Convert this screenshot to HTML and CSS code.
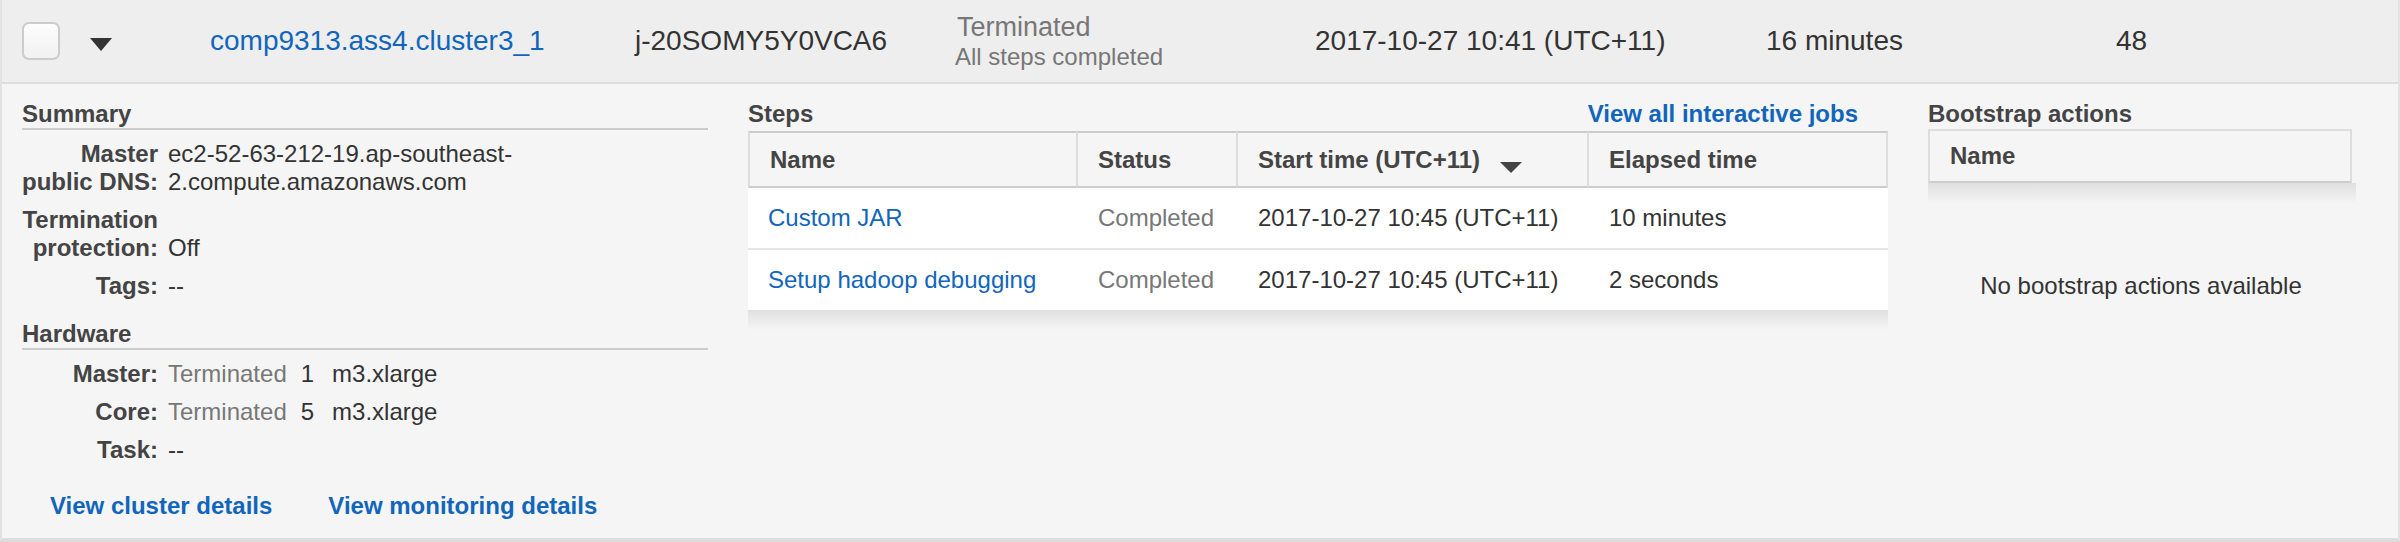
FILE: index.html
```html
<!DOCTYPE html>
<html lang="en">
<head>
<meta charset="utf-8">
<title>Cluster</title>
<link rel="stylesheet" href="styles.css">
</head>
<body>
<div class="cluster">
  <div class="row-head">
    <div class="c-check"><span class="checkbox"></span></div>
    <div class="c-toggle"><svg width="22" height="13" viewBox="0 0 22 13"><polygon points="0,0 22,0 11,13" fill="#333"/></svg></div>
    <div class="c-name"><a class="link">comp9313.ass4.cluster3_1</a></div>
    <div class="c-text">j-20SOMY5Y0VCA6</div>
    <div class="c-status">
      <div class="st-main">Terminated</div>
      <div class="st-sub">All steps completed</div>
    </div>
    <div class="c-text">2017-10-27 10:41 (UTC+11)</div>
    <div class="c-text">16 minutes</div>
    <div class="c-text">48</div>
  </div>

  <div class="details">
    <div class="col-left">
      <h3 class="sec-title ruled">Summary</h3>
      <div class="kv">
        <div class="kv-row">
          <div class="kv-label">Master<br>public DNS:</div>
          <div class="kv-value">ec2-52-63-212-19.ap-southeast-<br>2.compute.amazonaws.com</div>
        </div>
        <div class="kv-row">
          <div class="kv-label">Termination<br>protection:</div>
          <div class="kv-value">Off</div>
        </div>
        <div class="kv-row">
          <div class="kv-label">Tags:</div>
          <div class="kv-value">--</div>
        </div>
      </div>

      <h3 class="sec-title ruled hw">Hardware</h3>
      <div class="kv">
        <div class="kv-row">
          <div class="kv-label">Master:</div>
          <div class="kv-value"><span class="muted">Terminated</span><span class="cnt">1</span><span>m3.xlarge</span></div>
        </div>
        <div class="kv-row">
          <div class="kv-label">Core:</div>
          <div class="kv-value"><span class="muted">Terminated</span><span class="cnt">5</span><span>m3.xlarge</span></div>
        </div>
        <div class="kv-row">
          <div class="kv-label">Task:</div>
          <div class="kv-value">--</div>
        </div>
      </div>

      <div class="links">
        <a class="link bold">View cluster details</a>
        <a class="link bold">View monitoring details</a>
      </div>
    </div>

    <div class="col-mid">
      <div class="mid-head">
        <h3 class="sec-title">Steps</h3>
        <a class="link bold jobs">View all interactive jobs</a>
      </div>
      <div class="steps">
        <div class="th first">Name</div>
        <div class="th">Status</div>
        <div class="th">Start time (UTC+11) <svg class="sort" width="22" height="11" viewBox="0 0 22 11"><polygon points="0,0 22,0 11,11" fill="#444"/></svg></div>
        <div class="th last">Elapsed time</div>

        <div class="td first"><a class="link">Custom JAR</a></div>
        <div class="td muted">Completed</div>
        <div class="td">2017-10-27 10:45 (UTC+11)</div>
        <div class="td">10 minutes</div>

        <div class="td first lastrow"><a class="link">Setup hadoop debugging</a></div>
        <div class="td muted lastrow">Completed</div>
        <div class="td lastrow">2017-10-27 10:45 (UTC+11)</div>
        <div class="td lastrow">2 seconds</div>
      </div>
      <div class="shade"></div>
    </div>

    <div class="col-right">
      <h3 class="sec-title">Bootstrap actions</h3>
      <div class="bs-head">Name</div>
      <div class="shade bs-shade"></div>
      <div class="empty">No bootstrap actions available</div>
    </div>
  </div>
</div>
</body>
</html>
```

FILE: styles.css
```css
html, body {
  margin: 0;
  padding: 0;
}

body {
  background: #dddddd;
  font-family: "Liberation Sans", Helvetica, Arial, sans-serif;
  color: #333333;
  width: 2400px;
  height: 542px;
  overflow: hidden;
}

.cluster {
  border-left: 2px solid #e2e2e2;
  border-right: 2px solid #e2e2e2;
}

.link {
  color: #1166bb;
  text-decoration: none;
}

.bold {
  font-weight: bold;
}

.muted {
  color: #777777;
}

/* ---------- top row ---------- */
.row-head {
  height: 82px;
  background: #eeeeee;
  border-bottom: 2px solid #dddddd;
  display: grid;
  grid-template-columns: 68px 120px 425px 322px 358px 451px 350px 1fr;
  align-items: center;
  padding-left: 20px;
  font-size: 28px;
  line-height: 32px;
}

.c-check {
  display: flex;
  align-items: center;
}

.checkbox {
  display: block;
  width: 34px;
  height: 34px;
  border: 2px solid #cccccc;
  border-radius: 7px;
  background: linear-gradient(#fdfdfd, #f1f1f1);
}

.c-toggle {
  display: flex;
  margin-top: 6px;
}

.c-status {
  color: #777777;
}

.st-main {
  font-size: 27px;
  line-height: 30px;
}

.st-sub {
  font-size: 24px;
  line-height: 29px;
  margin-left: -2px;
}

/* ---------- details ---------- */
.details {
  background: #f5f5f5;
  border-bottom: 2px solid #dddddd;
  display: flex;
  padding: 16px 0 18px 20px;
  font-size: 24px;
  line-height: 28px;
}

.sec-title {
  margin: 0;
  font-size: 24px;
  line-height: 28px;
  font-weight: bold;
  color: #444444;
}

.ruled {
  border-bottom: 2px solid #cccccc;
}

.col-left {
  width: 686px;
  flex: none;
}

.kv-row {
  display: grid;
  grid-template-columns: 140px 1fr;
  column-gap: 10px;
  align-items: end;
  margin-top: 10px;
  margin-left: -4px;
}

.kv-label {
  text-align: right;
  font-weight: bold;
  color: #444444;
  white-space: nowrap;
}

.kv-value {
  white-space: nowrap;
}

.kv-value .muted {
  margin-right: 14px;
}

.kv-value .cnt {
  margin-right: 18px;
}

.hw {
  margin-top: 20px;
}

.links {
  margin-top: 28px;
  padding-left: 28px;
  display: flex;
  gap: 56px;
}

/* steps */
.col-mid {
  width: 1140px;
  flex: none;
  margin-left: 40px;
}

.mid-head {
  display: flex;
  justify-content: space-between;
  align-items: baseline;
  padding-right: 30px;
}

.steps {
  margin-top: 3px;
  display: grid;
  grid-template-columns: 328px 160px 351px 1fr;
}

.th {
  height: 53px;
  display: flex;
  align-items: center;
  padding-left: 20px;
  border-top: 2px solid #cccccc;
  border-bottom: 2px solid #cccccc;
  border-left: 2px solid #dddddd;
  font-weight: bold;
  color: #444444;
  white-space: nowrap;
}

.th.last {
  border-right: 2px solid #dddddd;
}

.sort {
  margin-left: 20px;
  margin-top: 16px;
}

.td {
  height: 60px;
  display: flex;
  align-items: center;
  padding-left: 22px;
  background: #ffffff;
  border-bottom: 2px solid #e6e6e6;
  white-space: nowrap;
}

.td.first {
  padding-left: 20px;
}

.td.lastrow {
  border-bottom: none;
}

.shade {
  height: 20px;
  background: linear-gradient(rgba(0, 0, 0, 0.085), rgba(0, 0, 0, 0));
}

/* bootstrap */
.col-right {
  width: 428px;
  flex: none;
  margin-left: 40px;
}

.bs-head {
  margin-top: 1px;
  width: 400px;
  height: 50px;
  padding-left: 20px;
  display: flex;
  align-items: center;
  border: 2px solid #dddddd;
  border-bottom-color: #cccccc;
  font-weight: bold;
  color: #444444;
}

.bs-shade {
  height: 21px;
}

.empty {
  margin-top: 68px;
  width: 426px;
  text-align: center;
}
```
